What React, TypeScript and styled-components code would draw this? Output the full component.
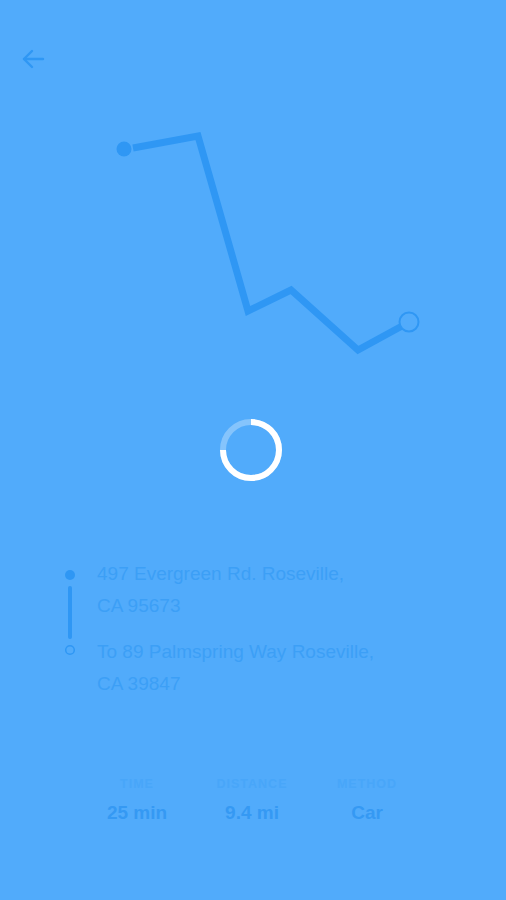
import React from "react";
import styled, { createGlobalStyle } from "styled-components";

const Global = createGlobalStyle`
  html, body { margin: 0; padding: 0; background: #51abfb; }
  body { font-family: "Liberation Sans", Arial, sans-serif; }
`;

const Page = styled.div`
  width: 506px;
  height: 900px;
  background: #51abfb;
  display: flex;
  flex-direction: column;
  overflow: hidden;
`;

const Header = styled.div`
  height: 110px;
  box-sizing: border-box;
  padding: 47px 0 0 21px;
`;

const BackButton = styled.button`
  width: 24px;
  height: 24px;
  padding: 0;
  border: 0;
  background: transparent;
  display: flex;
  cursor: pointer;
`;

const Chart = styled.svg`
  display: block;
  width: 506px;
  height: 260px;
`;

const SpinnerWrap = styled.div`
  margin-top: 45px;
  padding-right: 4px;
  display: flex;
  justify-content: center;
`;

const Route = styled.div`
  margin-top: 73px;
  display: flex;
  padding-left: 62px;
  gap: 19px;
`;

const Timeline = styled.svg`
  display: block;
  width: 16px;
  height: 142px;
  flex: none;
`;

const Addresses = styled.div`
  display: flex;
  flex-direction: column;
  gap: 14px;
`;

const Address = styled.p`
  margin: 0;
  font-size: 19px;
  line-height: 32px;
  color: #3c9ff6;
`;

const Stats = styled.div`
  margin: 76px auto 0;
  width: 345px;
  padding-right: 2px;
  display: grid;
  grid-template-columns: repeat(3, 1fr);
`;

const Stat = styled.div`
  display: flex;
  flex-direction: column;
  align-items: center;
  gap: 10px;
`;

const Label = styled.div`
  font-size: 12.5px;
  line-height: 16px;
  font-weight: 700;
  letter-spacing: 1px;
  text-transform: uppercase;
  color: #48a6f9;
`;

const Value = styled.div`
  font-size: 19px;
  line-height: 22px;
  font-weight: 700;
  color: #3599f3;
`;

const LINE = "#2f97f4";
const BG = "#51abfb";

export default function App() {
  const stats = [
    { label: "Time", value: "25 min" },
    { label: "Distance", value: "9.4 mi" },
    { label: "Method", value: "Car" },
  ];
  return (
    <>
      <Global />
      <Page>
        <Header>
          <BackButton aria-label="Back">
            <svg width="24" height="24" viewBox="0 0 24 24" fill="none" stroke={LINE} strokeWidth="2.4" strokeLinecap="round" strokeLinejoin="round">
              <path d="M22 12H3" />
              <path d="M11 4l-8 8 8 8" />
            </svg>
          </BackButton>
        </Header>
        <Chart viewBox="0 110 506 260">
          <polyline
            points="133,148 198,136 248,311 291,290 358,350 402,326"
            fill="none"
            stroke={LINE}
            strokeWidth="7"
            strokeLinejoin="miter"
          />
          <circle cx="124" cy="149" r="7.5" fill={LINE} />
          <circle cx="409" cy="322" r="9.5" fill={BG} stroke={LINE} strokeWidth="2" />
        </Chart>
        <SpinnerWrap>
          <svg width="70" height="70" viewBox="0 0 70 70">
            <circle cx="35" cy="35" r="28" fill="none" stroke="rgba(255,255,255,0.3)" strokeWidth="6" />
            <path d="M35 7 A28 28 0 1 1 7 35" fill="none" stroke="#fff" strokeWidth="6" />
          </svg>
        </SpinnerWrap>
        <Route>
          <Timeline viewBox="0 0 16 142">
            <circle cx="8" cy="17" r="5" fill={LINE} />
            <line x1="8" y1="30" x2="8" y2="79" stroke={LINE} strokeWidth="4" strokeLinecap="round" />
            <circle cx="8" cy="92" r="4.3" fill="none" stroke={LINE} strokeWidth="1.5" />
          </Timeline>
          <Addresses>
            <Address>
              497 Evergreen Rd. Roseville,
              <br />
              CA 95673
            </Address>
            <Address>
              To 89 Palmspring Way Roseville,
              <br />
              CA 39847
            </Address>
          </Addresses>
        </Route>
        <Stats>
          {stats.map((s) => (
            <Stat key={s.label}>
              <Label>{s.label}</Label>
              <Value>{s.value}</Value>
            </Stat>
          ))}
        </Stats>
      </Page>
    </>
  );
}
